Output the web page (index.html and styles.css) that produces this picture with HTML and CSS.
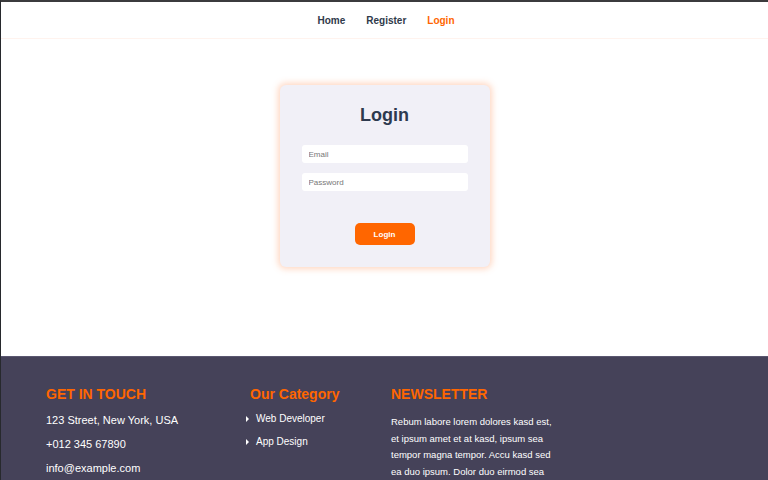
FILE: index.html
```html
<!DOCTYPE html>
<html>
<head>
<meta charset="utf-8">
<link rel="stylesheet" href="styles.css">
</head>
<body>
<div class="frame">
  <nav class="nav">
    <a class="nav-link" href="#">Home</a>
    <a class="nav-link" href="#">Register</a>
    <a class="nav-link active" href="#">Login</a>
  </nav>
  <main class="main">
    <form class="card">
      <h1 class="card-title">Login</h1>
      <input class="field" type="email" placeholder="Email">
      <input class="field" type="password" placeholder="Password">
      <button class="btn" type="button">Login</button>
    </form>
  </main>
  <footer class="footer">
    <div class="col col-touch">
      <h3 class="col-title upper">GET IN TOUCH</h3>
      <p class="touch-item">123 Street, New York, USA</p>
      <p class="touch-item">+012 345 67890</p>
      <p class="touch-item">info@example.com</p>
    </div>
    <div class="col col-cat">
      <h3 class="col-title cat-title">Our Category</h3>
      <ul class="cat-list">
        <li class="cat-item"><span class="caret"></span>Web Developer</li>
        <li class="cat-item"><span class="caret"></span>App Design</li>
      </ul>
    </div>
    <div class="col col-news">
      <h3 class="col-title upper">NEWSLETTER</h3>
      <p class="news-text">Rebum labore lorem dolores kasd est, et ipsum amet et at kasd, ipsum sea tempor magna tempor. Accu kasd sed ea duo ipsum. Dolor duo eirmod sea justo no lorem est diam</p>
    </div>
  </footer>
</div>
</body>
</html>
```

FILE: styles.css
```css
* { box-sizing: border-box; }
html, body { margin: 0; padding: 0; }
body {
  font-family: "Liberation Sans", Arial, sans-serif;
  background: #fff;
  height: 480px;
  overflow: hidden;
}
.frame {
  border-top: 2px solid #3b3b3d;
  border-left: 1px solid #27292d;
  height: 480px;
  display: flex;
  flex-direction: column;
}
.nav {
  flex-shrink: 0;
  height: 37px;
  border-bottom: 1px solid #fff3ee;
  display: flex;
  justify-content: center;
  align-items: center;
  gap: 21px;
  padding-left: 3px;
}
.nav-link {
  font-size: 10px;
  font-weight: bold;
  color: #2f3a4a;
  text-decoration: none;
}
.nav-link.active { color: #ff6600; }
.main {
  flex-shrink: 0;
  height: 317px;
  display: flex;
  justify-content: center;
  padding-top: 46px;
}
.card {
  width: 210px;
  height: 182px;
  background: #f1f0f7;
  border-radius: 6px;
  box-shadow: 0 0 6px 2px rgba(255, 140, 80, 0.35);
  display: flex;
  flex-direction: column;
  align-items: center;
  padding-top: 20px;
}
.card-title {
  margin: 0 0 20px;
  font-size: 18px;
  line-height: 20px;
  font-weight: bold;
  color: #2d3a4f;
}
.field {
  width: 166px;
  height: 18px;
  border: none;
  border-radius: 3px;
  background: #fff;
  font-family: "Liberation Sans", Arial, sans-serif;
  font-size: 8px;
  padding: 0 7px;
  margin-bottom: 10px;
  outline: none;
}
.field::placeholder { color: #777; }
.btn {
  margin-top: 22px;
  width: 60px;
  height: 22px;
  border: none;
  border-radius: 5px;
  background: #ff6600;
  color: #fff;
  font-family: "Liberation Sans", Arial, sans-serif;
  font-size: 8px;
  font-weight: bold;
}
.footer {
  flex: 1;
  background: #454259;
  border-top: 1px solid #5a5770;
  display: flex;
  padding: 29px 0 0 45px;
}
.col-title {
  margin: 0;
  font-size: 14px;
  line-height: 16px;
  font-weight: bold;
  color: #ff6600;
}
.col-touch { width: 200px; }
.touch-item {
  margin: 0;
  color: #fff;
  font-size: 11px;
  line-height: 13px;
}
.col-touch .col-title { margin-bottom: 12px; }
.col-touch .touch-item + .touch-item { margin-top: 11px; }
.col-cat { width: 145px; }
.cat-title { padding-left: 4px; margin-bottom: 11px; }
.cat-list { list-style: none; margin: 0; padding: 0; }
.cat-item {
  color: #fff;
  font-size: 10px;
  line-height: 12px;
  display: flex;
  align-items: center;
  margin-bottom: 11px;
}
.caret {
  width: 0;
  height: 0;
  border-top: 3px solid transparent;
  border-bottom: 3px solid transparent;
  border-left: 3px solid #fff;
  margin-right: 7px;
}
.col-news { width: 170px; }
.col-news .col-title { margin-bottom: 12px; }
.news-text {
  margin: 0;
  color: #fff;
  font-size: 9.5px;
  line-height: 16.5px;
  width: 166px;
}
```
